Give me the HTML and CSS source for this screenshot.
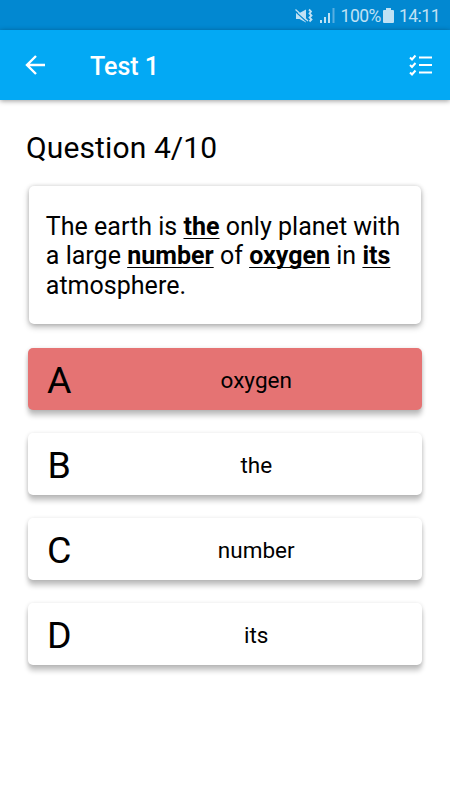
FILE: index.html
```html
<!DOCTYPE html>
<html lang="en">
<head>
<meta charset="utf-8">
<title>Test 1</title>
<link rel="stylesheet" href="styles.css">
</head>
<body>
<div class="statusbar">
  <svg class="mute" width="18" height="16" viewBox="0 0 18 16"><path d="M1 5h3.500L11 1.500v13L4.500 11H1z"/><path class="slash" d="M0 3.200 12 14"/><path class="edge" d="M.5 1.500 13 13"/><path class="wave" d="M14 1.500l2 2-1.500 2 2 2-2 2 2 2-2 2"/></svg>
  <svg class="signal" width="15" height="15" viewBox="0 0 15 15"><path d="M0 12h2v3H0zM4 9h2v6H4zM8 5h2v10H8z"/><path class="dim" d="M12.500 0h2v15h-2z"/></svg>
  <span class="percent">100%</span>
  <svg class="battery" width="11" height="15" viewBox="0 0 11 15"><path d="M3 0h5v2h2q1 0 1 1v11q0 1-1 1H1q-1 0-1-1V3q0-1 1-1h2z"/></svg>
  <span class="time">14:11</span>
</div>
<header class="appbar">
  <svg class="back" width="20" height="20" viewBox="0 0 20 20"><path d="M20 10H2M11 1 2 10l9 9"/></svg>
  <h1>Test 1</h1>
  <svg class="checklist" width="24" height="22" viewBox="0 0 24 22"><path d="M10 3.500H23M10 11H23M10 18.500H23"/><path class="ticks" d="M1 3.500l2 2L6.500 1.500M1 11l2 2L6.500 9M1 18.500l2 2 3.500-4"/></svg>
</header>
<main>
  <h2>Question 4/10</h2>
  <p class="question">The earth is <b>the</b> only planet with<br>a large <b>number</b> of <b>oxygen</b> in <b>its</b><br>atmosphere.</p>
  <div class="options">
    <div class="option wrong"><span class="letter">A</span><span class="answer">oxygen</span></div>
    <div class="option"><span class="letter">B</span><span class="answer">the</span></div>
    <div class="option"><span class="letter">C</span><span class="answer">number</span></div>
    <div class="option"><span class="letter">D</span><span class="answer">its</span></div>
  </div>
</main>
</body>
</html>
```
FILE: styles.css
```css
* { box-sizing: border-box; }
body {
  margin: 0;
  height: 800px;
  background: #fff;
  color: #000;
  font-family: Roboto, "Liberation Sans", sans-serif;
  overflow: hidden;
}
svg { display: block; flex: none; }
.statusbar {
  display: flex;
  align-items: center;
  justify-content: flex-end;
  height: 30px;
  padding: 2px 10px 0 0;
  background: #0288d1;
  color: #c0e1f4;
  font-size: 17.5px;
  line-height: 28px;
  letter-spacing: -.5px;
}
.statusbar svg { fill: #c0e1f4; }
.mute { margin-right: 7px; }
.mute .slash { fill: none; stroke: #0288d1; stroke-width: 1.2; }
.mute .edge { fill: none; stroke: #c0e1f4; stroke-width: 1.3; }
.mute .wave { fill: none; stroke: #c0e1f4; stroke-width: 1.8; }
.signal { margin: -1px 6px 0 0; }
.signal .dim { opacity: .45; }
.battery { margin: -1px 5px 0 2px; }
.appbar {
  display: flex;
  align-items: center;
  height: 70px;
  padding: 0 17px 0 25px;
  background: #03a9f4;
  box-shadow: 0 1px 5px rgba(0, 0, 0, .4);
}
.appbar svg { fill: none; stroke: #fff; stroke-width: 2.4; }
.appbar .checklist { margin-left: auto; stroke-width: 2; }
.appbar .ticks { stroke-width: 2; }
h1 {
  margin: 3px 0 0 45px;
  color: #fff;
  font-size: 25px;
  font-weight: 500;
  line-height: 30px;
}
main { padding: 30px 28px 0; }
h2 {
  margin: 0 0 0 -2px;
  font-size: 30px;
  font-weight: 400;
  line-height: 36px;
  letter-spacing: .12px;
}
.question {
  height: 137.5px;
  margin: 20px 1px 24px;
  padding: 26px 0 0 16.8px;
  border-radius: 5px;
  font-size: 25px;
  line-height: 29.4px;
  letter-spacing: .02px;
  white-space: nowrap;
  box-shadow: 0 3px 6px rgba(0, 0, 0, .28), 0 0 4px rgba(0, 0, 0, .14);
}
.question b {
  font-weight: 700;
  text-decoration: underline;
  text-decoration-thickness: 1px;
  text-decoration-skip-ink: none;
  text-underline-offset: 3px;
}
.options { display: grid; gap: 22.5px; }
.option {
  display: flex;
  align-items: center;
  height: 62.5px;
  border-radius: 5px;
  background: #fff;
  box-shadow: 0 6px 5px rgba(0, 0, 0, .2), 0 1px 4px rgba(0, 0, 0, .16);
}
.wrong { background: #e57373; }
.letter {
  width: 62.5px;
  padding-top: 2px;
  text-align: center;
  font-size: 37.5px;
  line-height: 44px;
}
.answer {
  flex: 1;
  padding-top: 2px;
  text-align: center;
  font-size: 22.5px;
  line-height: 26px;
}
```
